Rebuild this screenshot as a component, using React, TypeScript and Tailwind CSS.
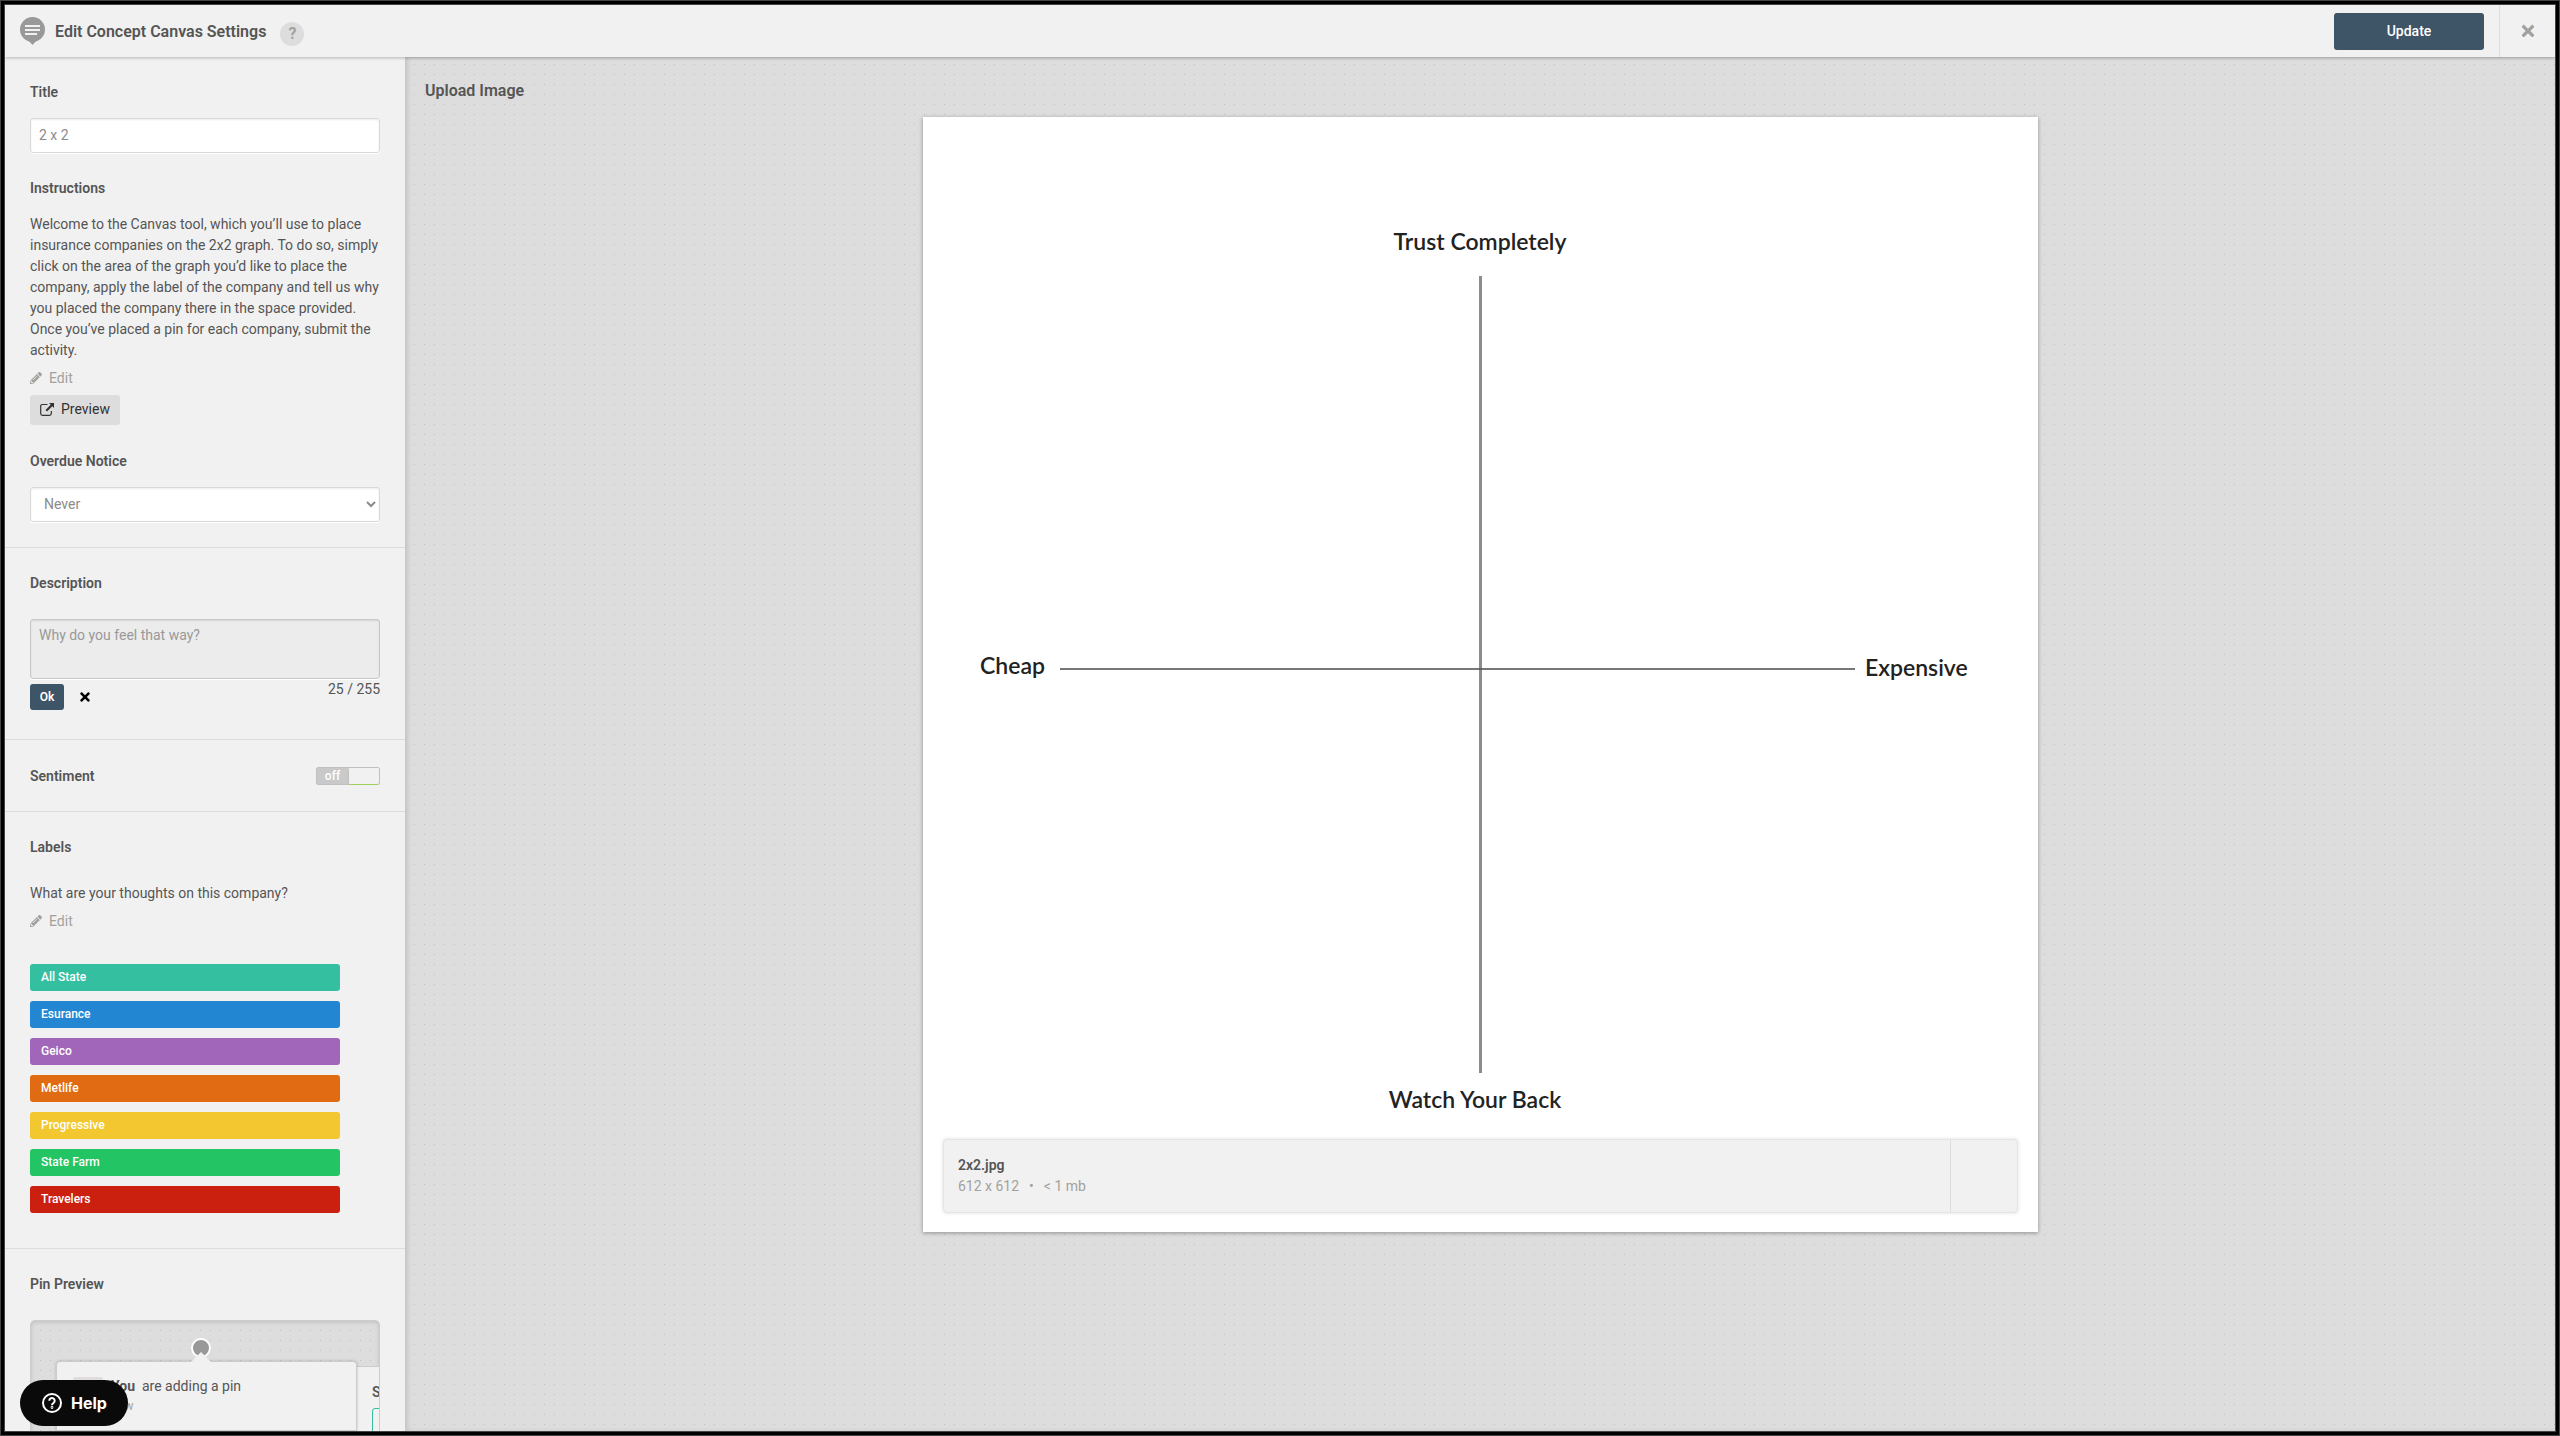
import React from "react";
import { FaPencilAlt, FaTimes } from "react-icons/fa";

const labels = [
  { name: "All State", color: "bg-[#35bfa1]" },
  { name: "Esurance", color: "bg-[#2386d3]" },
  { name: "Geico", color: "bg-[#a166b9]" },
  { name: "Metlife", color: "bg-[#e06b13]" },
  { name: "Progressive", color: "bg-[#f2c730]" },
  { name: "State Farm", color: "bg-[#22c463]" },
  { name: "Travelers", color: "bg-[#cb1f10]" },
];

// One darker pixel in the corner of every 10px tile.
const dots =
  "bg-[#ddd] bg-[linear-gradient(to_right,#ddd_9px,transparent_9px),linear-gradient(to_bottom,#ddd_9px,#bfbfbf_9px)] bg-[length:10px_10px]";

function Heading({ children, htmlFor }: { children: React.ReactNode; htmlFor?: string }) {
  const cls = "block text-sm leading-5 font-semibold text-[#555]";
  return htmlFor ? (
    <label htmlFor={htmlFor} className={cls}>
      {children}
    </label>
  ) : (
    <h2 className={cls}>{children}</h2>
  );
}

function EditButton() {
  return (
    <button type="button" className="flex items-center gap-[7px] text-sm leading-5 text-[#a3a19d]">
      <FaPencilAlt className="size-3" />
      Edit
    </button>
  );
}

function PreviewIcon() {
  return (
    <svg viewBox="0 0 14 13" className="h-[13px] w-[14px]" fill="none">
      <path
        d="M7.5 1.5H2.5Q.7 1.5.7 3.300V10.500Q.7 12.300 2.500 12.300H9.500Q11.300 12.300 11.300 10.500V8"
        stroke="#333"
        strokeWidth="1.200"
      />
      <path d="M9 0H14V5L12.300 3.300L7 8.500L5.500 7L10.700 1.700Z" fill="#333" />
    </svg>
  );
}

function Header() {
  return (
    <header className="relative z-10 flex h-[52px] shrink-0 items-center bg-[#f1f1f1] shadow-[0_1px_3px_rgba(0,0,0,0.25)]">
      <svg viewBox="0 0 25 28" className="ml-[15px] h-7 w-[25px] shrink-0">
        <circle cx="12.500" cy="12.500" r="12.500" fill="#999" />
        <path d="M8 23L12.500 28L17 23Z" fill="#999" />
        <path d="M5 9H20M5 13H20M5 17H17" stroke="#f1f1f1" strokeWidth="2" />
      </svg>
      <h1 className="mt-0.5 ml-2.5 text-base leading-6 font-semibold text-[#555]">
        Edit Concept Canvas Settings
      </h1>
      <button
        type="button"
        aria-label="About this page"
        className="mt-1.5 ml-3.5 flex size-6 items-center justify-center rounded-full bg-[#ddd] text-base font-bold text-[#a3a19d]"
      >
        ?
      </button>
      <button
        type="button"
        className="ml-auto h-[37px] w-[150px] rounded-[3px] bg-[#3e5467] text-sm font-medium text-white"
      >
        Update
      </button>
      <div className="ml-[15px] flex h-full w-14 items-center justify-center border-l border-[#ddd]">
        <button type="button" aria-label="Close">
          <FaTimes className="size-[18px] text-[#a3a19d]" />
        </button>
      </div>
    </header>
  );
}

function PinPreview() {
  return (
    <div
      className={`relative mt-[26px] h-[300px] overflow-hidden rounded-t-[5px] border border-[#ccc] shadow-[inset_0_1px_4px_rgba(0,0,0,0.15)] ${dots}`}
    >
      <div className="absolute top-[45px] left-[324px] h-64 w-[60px] border border-[#ccc] bg-[#f1f1f1] px-4 pt-[15px] text-sm leading-5 font-semibold text-[#555]">
        Sentiment
        <div className="mt-1.5 h-8 rounded-[3px] border border-[#35bfa1]" />
      </div>
      <div className="absolute top-[17px] left-40 size-5 rounded-full border-2 border-white bg-[#999]" />
      <div className="absolute top-[40px] left-[25px] h-64 w-[301px] rounded-t-[4px] border border-[#ccc] bg-[#f1f1f1] shadow-[0_0_3px_rgba(0,0,0,0.2)]">
        <svg viewBox="0 0 20 10" className="absolute -top-[10px] left-[134px] h-2.5 w-5">
          <path d="M0 10L10 0L20 10Z" fill="#f1f1f1" />
        </svg>
        <div className="flex gap-2 px-4 pt-3.5">
          <div className="mt-px size-[30px] shrink-0 rounded-[2px] bg-[#dfdcdb]" />
          <div className="text-sm leading-5 text-[#555]">
            <p>
              <b className="mr-[7px] font-bold">You</b>are adding a pin
            </p>
            <p className="text-xs leading-5 text-[#a3a19d]">now</p>
          </div>
        </div>
        <div className="mt-3.5 border-t border-[#ccc]" />
      </div>
    </div>
  );
}

function Sidebar() {
  const field =
    "block w-full rounded-[3px] border border-[#d8d8d8] bg-white text-sm text-[#8b8b8b] shadow-[inset_0_1px_2px_rgba(0,0,0,0.08),0_1px_0_#fff]";
  return (
    <aside className="w-[400px] shrink-0 overflow-hidden text-sm text-[#555]">
      <section className="border-b border-[#ddd] px-[25px] pt-[25px] pb-[25px]">
        <Heading htmlFor="title">Title</Heading>
        <input id="title" defaultValue="2 x 2" className={`mt-4 h-[35px] px-2 pb-px ${field}`} />
        <div className="mt-[25px]">
          <Heading>Instructions</Heading>
        </div>
        <p className="mt-4 leading-[21px]">
          Welcome to the Canvas tool, which you’ll use to place insurance companies on the 2x2
          graph. To do so, simply click on the area of the graph you’d like to place the company,
          apply the label of the company and tell us why you placed the company there in the space
          provided. Once you’ve placed a pin for each company, submit the activity.
        </p>
        <div className="mt-[7px]">
          <EditButton />
        </div>
        <button
          type="button"
          className="mt-[7px] flex h-[30px] items-center gap-[7px] rounded-[3px] bg-[#ddd] px-2.5 pb-0.5 text-[#333]"
        >
          <PreviewIcon />
          Preview
        </button>
        <div className="mt-[26px]">
          <Heading htmlFor="overdue">Overdue Notice</Heading>
        </div>
        <select id="overdue" className={`mt-4 h-[35px] px-[9px] pb-px ${field}`}>
          <option>Never</option>
        </select>
      </section>

      <section className="border-b border-[#ddd] px-[25px] pt-[25px] pb-[29px]">
        <Heading htmlFor="description">Description</Heading>
        <textarea
          id="description"
          defaultValue="Why do you feel that way?"
          className="mt-[26px] block h-[60px] w-full resize-none rounded-[3px] border border-[#c8c8c8] bg-[#ececec] px-2 py-[5px] text-sm leading-5 text-[#999] shadow-[inset_0_1px_2px_rgba(0,0,0,0.1),0_1px_0_#fff]"
        />
        <div className="mt-[5px] flex items-start">
          <button
            type="button"
            className="h-[26px] w-[34px] rounded-[3px] bg-[#3e5467] text-xs font-semibold text-white"
          >
            Ok
          </button>
          <button type="button" aria-label="Cancel" className="ml-3.5 flex h-[26px] items-center">
            <FaTimes className="size-3.5 text-black" />
          </button>
          <span className="ml-auto leading-[11px]">25 / 255</span>
        </div>
      </section>

      <section className="flex h-[72px] items-center justify-between border-b border-[#ddd] px-[25px]">
        <Heading>Sentiment</Heading>
        <button
          type="button"
          role="switch"
          aria-checked="false"
          aria-label="Sentiment"
          className="flex h-[18px] w-16 rounded-[2px] border border-[#c0c0c0] text-xs leading-4 font-medium text-white"
        >
          <span className="h-full w-1/2 bg-[#c9c9c9]">off</span>
          <span className="h-[17px] w-1/2 rounded-[2px] border-b border-l border-[#c0c0c0] border-b-[#a2cf5c] bg-[#f1f1f1]" />
        </button>
      </section>

      <section className="border-b border-[#ddd] px-[25px] pt-[25px] pb-[35px]">
        <Heading>Labels</Heading>
        <p className="mt-[26px] leading-5">What are your thoughts on this company?</p>
        <div className="mt-2">
          <EditButton />
        </div>
        <ul className="mt-[33px] mr-10 flex flex-col gap-2.5">
          {labels.map((l) => (
            <li
              key={l.name}
              className={`h-[27px] rounded-[3px] px-[11px] text-xs leading-[27px] font-medium text-white ${l.color}`}
            >
              {l.name}
            </li>
          ))}
        </ul>
      </section>

      <section className="px-[25px] pt-[25px]">
        <Heading>Pin Preview</Heading>
        <PinPreview />
      </section>
    </aside>
  );
}

function QuadrantChart() {
  return (
    <svg
      viewBox="0 0 1115 1115"
      className="col-start-1 row-start-1 w-full font-['Lato',sans-serif] text-[23px] font-semibold"
      fill="#222"
    >
      <path d="M557.500 159V956" stroke="#8c8c8c" strokeWidth="3" />
      <path d="M137 552H932" stroke="#555" strokeOpacity=".8" strokeWidth="2" />
      <text x="557" y="133" textAnchor="middle">
        Trust Completely
      </text>
      <text x="57" y="557">
        Cheap
      </text>
      <text x="942" y="559">
        Expensive
      </text>
      <text x="552" y="991" textAnchor="middle">
        Watch Your Back
      </text>
    </svg>
  );
}

function Canvas() {
  return (
    <main
      className={`min-w-0 flex-1 border-l border-[#c8c8c8] bg-[position:-1px_-2px] shadow-[inset_2px_0_4px_rgba(0,0,0,0.1)] ${dots}`}
    >
      <h2 className="pt-[22px] pl-[19px] text-base leading-6 font-semibold text-[#555]">
        Upload Image
      </h2>
      <div className="mx-auto mt-3.5 grid w-full max-w-[1115px] bg-white shadow-[0_1px_4px_rgba(0,0,0,0.35)]">
        <QuadrantChart />
        <div className="z-10 col-start-1 row-start-1 mx-5 mb-[19px] flex h-[74px] self-end rounded-[4px] border border-[#e4e4e4] bg-[#f1f1f1] shadow-[0_0_4px_rgba(0,0,0,0.12)]">
          <div className="flex-1 px-3.5 pt-[15px] text-sm leading-[21px]">
            <p className="font-semibold text-[#555]">2x2.jpg</p>
            <p className="text-[#a3a19d]">
              612 x 612<span className="mx-2.5">•</span>&lt; 1 mb
            </p>
          </div>
          <div className="w-[67px] border-l border-[#ddd]" />
        </div>
      </div>
    </main>
  );
}

export default function App() {
  return (
    <div className="h-screen bg-[#444] p-px font-['Roboto',sans-serif]">
      <div className="h-full bg-black p-[3px]">
        <div className="flex h-full flex-col overflow-hidden border border-[#444] bg-[#f1f1f1]">
          <Header />
          <div className="flex min-h-0 flex-1">
            <Sidebar />
            <Canvas />
          </div>
        </div>
      </div>
      <button
        type="button"
        className="fixed bottom-2.5 left-5 z-20 flex h-[46px] w-[108px] items-center gap-2 rounded-full bg-[#0a0a0a] pl-[21px] font-['Inter',sans-serif] text-base font-bold text-white"
      >
        <svg viewBox="0 0 22 22" className="size-[22px]" fill="none" stroke="#fff" strokeWidth="2">
          <circle cx="11" cy="11" r="9" />
          <path d="M8.300 8.800A2.700 2.700 0 1 1 12.500 11Q11 11.900 11 13.200" />
          <circle cx="11" cy="15.500" r=".4" />
        </svg>
        Help
      </button>
    </div>
  );
}
